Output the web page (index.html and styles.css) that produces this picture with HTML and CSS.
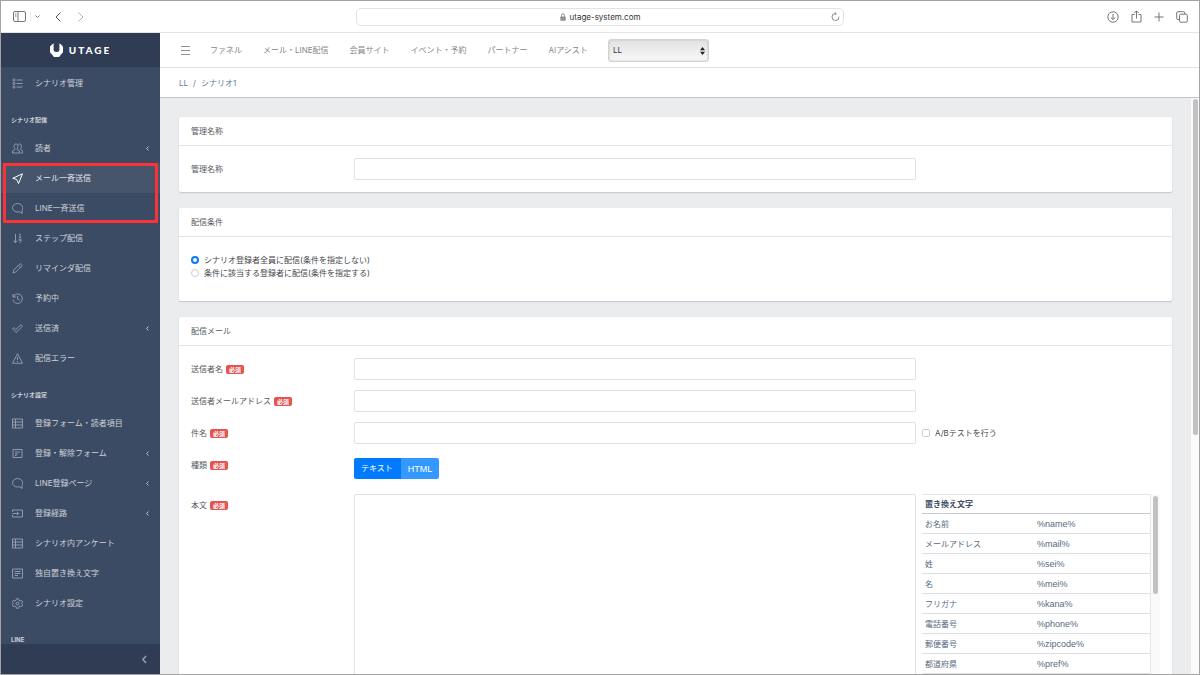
FILE: index.html
```html
<!DOCTYPE html>
<html lang="ja">
<head>
<meta charset="utf-8">
<meta name="viewport" content="width=device-width, initial-scale=1">
<title>UTAGE</title>
<link rel="stylesheet" href="styles.css">
</head>
<body>
<svg class="defs" width="0" height="0" aria-hidden="true">
  <symbol id="i-list" viewBox="0 0 22 22"><path d="M9 4h12M9 11h12M9 18h12"/><circle cx="4" cy="4" r="2.2"/><circle cx="4" cy="11" r="2.2"/><circle cx="4" cy="18" r="2.2"/></symbol>
  <symbol id="i-people" viewBox="0 0 22 22"><path d="M8 2c-3 0-4 2-4 4.500 0 2 .6 3.500 1.700 4.700v2L1 16v4h14v-4l-4.700-2.800v-2c1.100-1.200 1.700-2.700 1.700-4.700C12 4 11 2 8 2zM13 2.500c3.500-1.500 6 .5 6 4 0 2-.5 3.500-1.600 4.700v2L21.500 16v4H17"/></symbol>
  <symbol id="i-send" viewBox="0 0 22 22"><path d="M21 1.500 1.500 10.500l8 2.500L13 21z"/></symbol>
  <symbol id="i-chat" viewBox="0 0 22 22"><path d="M11 1C5.500 1 1 4.800 1 9.500S5.500 18 11 18c1.300 0 2.500-.2 3.600-.6l5.400 3.600v-6c1.200-1.500 1.500-3.300 1.500-5.500C21.500 4.800 16.500 1 11 1z"/></symbol>
  <symbol id="i-sort" viewBox="0 0 22 22"><path d="M7 2v17M3 15l4 4.500 4-4.500M14 3l2-1v7M14 9h4M18 13.500c0-2-4-2-4 0s4 2 4 0v3c0 1.500-1.500 2.500-3 2.500"/></symbol>
  <symbol id="i-pencil" viewBox="0 0 22 22"><path d="M2 20l1.500-6L15 2.500c1.300-1.300 2.800-1.300 4 0 1.300 1.200 1.300 2.700 0 4L7.500 18zM13 4.500 17.500 9"/></symbol>
  <symbol id="i-history" viewBox="0 0 22 22"><path d="M2 2v6h6M2.500 7.500A9.500 9.500 0 1 1 1.800 13M11 6v6l4.500 2"/></symbol>
  <symbol id="i-check" viewBox="0 0 22 22"><path d="M1 11.500 3.500 9l4 4L18 3.500 21 6.500 8 19z"/></symbol>
  <symbol id="i-warning" viewBox="0 0 22 22"><path d="M11 1.500 21 20.500H1zM11 8v6M11 16v2"/></symbol>
  <symbol id="i-table" viewBox="0 0 22 22"><path d="M1 2h20v18H1zM1 8h20M1 14h20M7 2v18"/></symbol>
  <symbol id="i-form" viewBox="0 0 22 22"><path d="M2 3h18v16H2zM6 8h10M6 12h6M6 15h3"/></symbol>
  <symbol id="i-notes" viewBox="0 0 22 22"><path d="M1 2h20v18H1zM5 7h12M5 11h12M5 15h7"/></symbol>
  <symbol id="i-route" viewBox="0 0 22 22"><path d="M1 8V4h20v14H1v-4M1 11h12M10 7.500l3.500 3.500-3.500 3.500"/></symbol>
  <symbol id="i-gear" viewBox="0 0 22 22"><path d="M9 1.500h4l1 3 2.500 1.300 3-.8 2 3.500L19.300 11l2.200 2.500-2 3.500-3-.8L14 17.500l-1 3H9l-1-3-2.500-1.300-3 .8-2-3.500L2.700 11 .5 8.500l2-3.500 3 .8L8 4.500z"/><circle cx="11" cy="11" r="3"/></symbol>
  <symbol id="i-left" viewBox="0 0 8 14"><path d="M6.500 1.500 1.500 7l5 5.500"/></symbol>
</svg>

<div class="window">
  <header class="browser">
    <div class="tools">
      <button class="tool" aria-label="サイドバー"><svg width="13" height="11" viewBox="0 0 13 11"><rect x=".5" y=".5" width="12" height="10" rx="1.500"/><path d="M5 .5v10M2 3h1.500M2 5h1.500"/></svg></button>
      <span class="tool-sep"></span>
      <button class="tool tool-menu" aria-label="タブグループ"><svg width="5" height="3" viewBox="0 0 5 3"><path d="M.5.500l2 2 2-2"/></svg></button>
      <button class="tool tool-back" aria-label="戻る"><svg width="6" height="10" viewBox="0 0 6 10"><path d="M5.500.500 1 5l4.500 4.500"/></svg></button>
      <button class="tool tool-next" aria-label="進む"><svg width="6" height="10" viewBox="0 0 6 10"><path d="M.5.500 5 5 .5 9.500"/></svg></button>
    </div>
    <div class="address">
      <svg class="lock" width="6" height="8" viewBox="0 0 6 8"><rect x=".3" y="3.500" width="5.400" height="4.200" rx=".8"/><path d="M1.500 4V2.300a1.500 1.500 0 0 1 3 0V4"/></svg>
      <span>utage-system.com</span>
      <button class="tool reload" aria-label="再読み込み"><svg width="9" height="9" viewBox="0 0 9 9"><path d="M8 4.700A3.500 3.500 0 1 1 4.700 1.500M3.700.200l1.500 1.300-1.500 1.500"/></svg></button>
    </div>
    <div class="tools tools-end">
      <button class="tool" aria-label="ダウンロード"><svg width="12" height="12" viewBox="0 0 12 12"><circle cx="6" cy="6" r="5.200"/><path d="M6 3v5.500M3.900 6.500 6 8.600l2.100-2.100"/></svg></button>
      <button class="tool" aria-label="共有"><svg width="11" height="13" viewBox="0 0 11 13"><path d="M3.500 4.500H1v7.500h9V4.500H7.500M5.500 8.500V1M3.300 3 5.500.800 7.700 3"/></svg></button>
      <button class="tool" aria-label="新規タブ"><svg width="10" height="10" viewBox="0 0 10 10"><path d="M5 .5v9M.5 5h9"/></svg></button>
      <button class="tool" aria-label="タブ一覧"><svg width="12" height="12" viewBox="0 0 12 12"><path d="M3.500 8.500H2a1.300 1.300 0 0 1-1.300-1.300V2A1.300 1.300 0 0 1 2 .7h5.500A1.300 1.300 0 0 1 8.800 2v1"/><rect x="3.500" y="3.200" width="7.800" height="8" rx="1.300"/></svg></button>
    </div>
  </header>

  <div class="app">
    <aside class="sidebar">
      <a class="brand" href="#"><svg width="13" height="14" viewBox="0 0 13 14"><path d="M3.600.300v6.400c0 1.300 1 2.300 2.900 2.300s2.900-1 2.900-2.300V.300l2.600 2.200c.7.600 1 1.200 1 2.200v3.600c0 1-.3 1.600-1 2.300l-1.300 1.100-.9 1.600c-.3.600-.7.700-1.400.700H4.600c-.7 0-1.100-.1-1.400-.7l-.9-1.600L1 10.600C.3 9.900 0 9.300 0 8.300V4.700c0-1 .3-1.600 1-2.200z"/></svg><span>UTAGE</span></a>
      <nav class="menu">
        <a class="item" href="#"><svg class="icon"><use href="#i-list"/></svg><span>シナリオ管理</span></a>
        <h2 class="group">シナリオ配信</h2>
        <a class="item" href="#"><svg class="icon"><use href="#i-people"/></svg><span>読者</span><svg class="more"><use href="#i-left"/></svg></a>
        <div class="marked">
          <a class="item active" href="#"><svg class="icon"><use href="#i-send"/></svg><span>メール一斉送信</span></a>
          <a class="item" href="#"><svg class="icon"><use href="#i-chat"/></svg><span>LINE一斉送信</span></a>
        </div>
        <a class="item" href="#"><svg class="icon"><use href="#i-sort"/></svg><span>ステップ配信</span></a>
        <a class="item" href="#"><svg class="icon"><use href="#i-pencil"/></svg><span>リマインダ配信</span></a>
        <a class="item" href="#"><svg class="icon"><use href="#i-history"/></svg><span>予約中</span></a>
        <a class="item" href="#"><svg class="icon"><use href="#i-check"/></svg><span>送信済</span><svg class="more"><use href="#i-left"/></svg></a>
        <a class="item" href="#"><svg class="icon"><use href="#i-warning"/></svg><span>配信エラー</span></a>
        <h2 class="group">シナリオ設定</h2>
        <a class="item" href="#"><svg class="icon"><use href="#i-table"/></svg><span>登録フォーム・読者項目</span></a>
        <a class="item" href="#"><svg class="icon"><use href="#i-form"/></svg><span>登録・解除フォーム</span><svg class="more"><use href="#i-left"/></svg></a>
        <a class="item" href="#"><svg class="icon"><use href="#i-chat"/></svg><span>LINE登録ページ</span><svg class="more"><use href="#i-left"/></svg></a>
        <a class="item" href="#"><svg class="icon"><use href="#i-route"/></svg><span>登録経路</span><svg class="more"><use href="#i-left"/></svg></a>
        <a class="item" href="#"><svg class="icon"><use href="#i-table"/></svg><span>シナリオ内アンケート</span></a>
        <a class="item" href="#"><svg class="icon"><use href="#i-notes"/></svg><span>独自置き換え文字</span></a>
        <a class="item" href="#"><svg class="icon"><use href="#i-gear"/></svg><span>シナリオ設定</span></a>
        <h2 class="group">LINE</h2>
      </nav>
      <button class="collapse" aria-label="メニューを閉じる"><svg><use href="#i-left"/></svg></button>
    </aside>

    <div class="content">
      <div class="topnav">
        <button class="burger" aria-label="メニュー"><svg width="9" height="9" viewBox="0 0 9 9"><path d="M0 .5h9M0 4.500h9M0 8.500h9"/></svg></button>
        <nav class="links">
          <a href="#">ファネル</a>
          <a href="#">メール・LINE配信</a>
          <a href="#">会員サイト</a>
          <a href="#">イベント・予約</a>
          <a href="#">パートナー</a>
          <a href="#">AIアシスト</a>
        </nav>
        <div class="account">
          <select aria-label="アカウント"><option>LL</option></select>
          <svg width="5" height="8" viewBox="0 0 5 8"><path d="M2.500 0 5 3.300H0zM2.500 8 0 4.700h5z"/></svg>
        </div>
      </div>
      <nav class="crumbs"><a href="#">LL</a><span>/</span><a href="#">シナリオ1</a></nav>

      <div class="scroller">
        <main class="cards">
          <section class="card">
            <h1 class="card-head">管理名称</h1>
            <div class="card-body">
              <div class="row"><label class="name" for="title">管理名称</label><input class="field" id="title" type="text"></div>
            </div>
          </section>
          <section class="card">
            <h1 class="card-head">配信条件</h1>
            <div class="card-body options">
              <label class="option"><input type="radio" name="target" checked><span>シナリオ登録者全員に配信(条件を指定しない)</span></label>
              <label class="option"><input type="radio" name="target"><span>条件に該当する登録者に配信(条件を指定する)</span></label>
            </div>
          </section>
          <section class="card">
            <h1 class="card-head">配信メール</h1>
            <div class="card-body">
              <div class="row"><label class="name" for="sender">送信者名<b class="badge">必須</b></label><input class="field" id="sender" type="text"></div>
              <div class="row"><label class="name" for="mail">送信者メールアドレス<b class="badge">必須</b></label><input class="field" id="mail" type="text"></div>
              <div class="row"><label class="name" for="subject">件名<b class="badge">必須</b></label><input class="field" id="subject" type="text"><label class="option"><input type="checkbox"><span>A/Bテストを行う</span></label></div>
              <div class="row"><span class="name">種類<b class="badge">必須</b></span><div class="toggle"><button class="on">テキスト</button><button>HTML</button></div></div>
              <div class="row">
                <label class="name" for="text">本文<b class="badge">必須</b></label>
                <textarea class="field area" id="text"></textarea>
                <div class="tokens">
                  <table>
                    <thead><tr><th colspan="2">置き換え文字</th></tr></thead>
                    <tbody>
                      <tr><td>お名前</td><td>%name%</td></tr>
                      <tr><td>メールアドレス</td><td>%mail%</td></tr>
                      <tr><td>姓</td><td>%sei%</td></tr>
                      <tr><td>名</td><td>%mei%</td></tr>
                      <tr><td>フリガナ</td><td>%kana%</td></tr>
                      <tr><td>電話番号</td><td>%phone%</td></tr>
                      <tr><td>郵便番号</td><td>%zipcode%</td></tr>
                      <tr><td>都道府県</td><td>%pref%</td></tr>
                      <tr><td></td><td></td></tr>
                    </tbody>
                  </table>
                  <div class="track"><div class="thumb"></div></div>
                </div>
              </div>
            </div>
          </section>
        </main>
        <div class="track page-track"><div class="thumb"></div></div>
      </div>
    </div>
  </div>
</div>
</body>
</html>
```
FILE: styles.css
```css
* { box-sizing: border-box; }

body {
  margin: 0;
  color: #55585d;
  font: 8px/12px Inter, "Noto Sans CJK JP", sans-serif;
}

button, input, select, textarea { font: inherit; margin: 0; }
button { padding: 0; border: 0; background: none; color: inherit; }
a { color: inherit; text-decoration: none; }
h1, h2 { margin: 0; font: inherit; }
svg { display: block; fill: none; stroke: currentColor; }
.defs { position: absolute; }

.window {
  display: flex;
  flex-direction: column;
  height: 100vh;
  overflow: hidden;
  border: 1px solid #a3a3a3;
  background: #fff;
}

/* browser bar */
.browser {
  display: grid;
  grid-template-columns: 1fr 488px 1fr;
  align-items: center;
  flex: none;
  height: 32px;
  border-bottom: 1px solid #e4e4e4;
  color: #777;
}
.tools { display: flex; align-items: center; padding-left: 12px; }
.tools-end { justify-content: flex-end; gap: 12px; padding: 0 11px 0 0; }
.tool { display: flex; }
.tool-sep { width: 1px; height: 10px; margin-left: 4px; background: #ececec; }
.tool-menu { margin-left: 4px; }
.tool-back { margin-left: 15px; color: #555; }
.tool-next { margin-left: 17px; color: #b0b0b0; }
.address {
  display: flex;
  align-items: center;
  justify-content: center;
  gap: 4px;
  position: relative;
  height: 18px;
  border: 1px solid #e3e3e3;
  border-radius: 5px;
  color: #333;
}
.lock { color: #909090; }
.lock rect { fill: currentColor; stroke: none; }
.reload { position: absolute; right: 3px; color: #8a8a8a; }

.app { display: flex; flex: 1; min-height: 0; }

/* sidebar */
.sidebar {
  display: flex;
  flex-direction: column;
  flex: none;
  width: 159px;
  background: #3c4b64;
  color: #ced2d8;
}
.brand {
  display: flex;
  align-items: center;
  justify-content: center;
  gap: 6px;
  flex: none;
  height: 34px;
  background: #303c54;
  color: #fff;
  font: 900 10px/12px Lato, sans-serif;
  letter-spacing: 2px;
}
.brand svg { fill: currentColor; stroke: none; }
.menu { flex: 1; min-height: 0; padding-top: 1px; overflow: hidden; }
.item {
  display: flex;
  align-items: center;
  gap: 12px;
  height: 30px;
  padding: 0 11px;
}
.item.active { background: #46546c; color: #e6e9ed; }
.icon { width: 11px; height: 11px; color: #a5adb9; stroke-width: 1.6; }
.active .icon { color: #fff; stroke-width: 2; }
.more { width: 3px; height: 5px; margin-left: auto; stroke-width: 2.5; }
.group {
  padding: 17px 10px 8px;
  font-size: 6px;
  font-weight: 700;
  line-height: 10px;
}
.marked { position: relative; }
.marked::after {
  content: "";
  position: absolute;
  inset: 0 2px 0 2px;
  border: 3px solid #fb3236;
  pointer-events: none;
}
.collapse {
  display: flex;
  align-items: center;
  justify-content: flex-end;
  flex: none;
  height: 30px;
  padding-right: 13px;
  background: #303c54;
  color: #959dab;
}
.collapse svg { width: 5px; height: 9px; stroke-width: 2.5; }

/* top navigation */
.content { display: flex; flex-direction: column; flex: 1; min-width: 0; }
.topnav {
  display: flex;
  align-items: center;
  gap: 20px;
  flex: none;
  height: 35px;
  padding-left: 21px;
  border-bottom: 1px solid #dfe1e5;
  color: #85868b;
}
.burger { display: flex; color: #8d8f96; }
.links { display: flex; gap: 21px; }
.account { position: relative; }
.account select {
  display: block;
  width: 101px;
  height: 23px;
  padding: 0 4px;
  appearance: none;
  border: 1px solid #d3d3d3;
  border-radius: 3px;
  background: linear-gradient(#e2e2e2, #f8f8f8);
  color: #333;
  box-shadow: inset 0 0 2px #bbb;
}
.account svg {
  position: absolute;
  top: 8px;
  right: 4px;
  fill: #222;
  stroke: none;
  pointer-events: none;
}
.crumbs {
  display: flex;
  align-items: center;
  gap: 5px;
  flex: none;
  height: 30px;
  padding-left: 19px;
  border-bottom: 1px solid #c0c4cc;
  color: #6b7890;
}

/* page area */
.scroller {
  display: flex;
  flex: 1;
  min-height: 0;
  overflow: hidden;
  background: #ebecee;
}
.cards {
  display: flex;
  flex-direction: column;
  gap: 16px;
  flex: 1;
  min-width: 0;
  padding: 19px 19px 0;
}
.card {
  flex: none;
  border-radius: 2px;
  background: #fff;
  box-shadow: 0 1px 1px #c6cad2, 0 1px 2px #d8dbe0;
}
.card-head { padding: 8px 12px; border-bottom: 1px solid #e2e4e7; }
.card-body { display: flex; flex-direction: column; gap: 10px; padding: 12px; }
.card-body.options { gap: 0; padding: 16px 12px 22px; }
.row {
  display: grid;
  grid-template-columns: 157fr 562fr 238fr;
  align-items: start;
  column-gap: 6px;
}
.name { display: flex; align-items: center; gap: 3px; height: 22px; }
.badge {
  height: 9px;
  margin-top: 1px;
  padding: 0 3px;
  border-radius: 2px;
  background: #e55353;
  color: #fff;
  font-size: 6px;
  font-weight: 700;
  line-height: 9px;
}
.field {
  width: 100%;
  height: 22px;
  padding: 4px 6px;
  border: 1px solid #dfe1e4;
  border-radius: 2px;
  background: #fff;
}
.area { display: block; height: 240px; resize: none; }
.option { display: flex; align-items: center; gap: 5px; height: 13px; color: #46484c; }
.row .option { height: 22px; }
.option input {
  flex: none;
  width: 8px;
  height: 8px;
  appearance: none;
  border: 1px solid #cfcfcf;
  border-radius: 2px;
  background: #fff;
}
.option input[type="radio"] { border-radius: 50%; }
.option input[type="radio"]:checked { border: 2px solid #0a7aff; }
.toggle { display: flex; padding: 4px 0 5px; }
.toggle button {
  height: 21px;
  padding: 0 7px;
  border-radius: 0 2px 2px 0;
  background: #3399ff;
  color: #fff;
  font-family: "Liberation Sans", "Noto Sans CJK JP", sans-serif;
  font-size: 9px;
}
.toggle .on {
  padding: 0 8px 0 7px;
  border-radius: 2px 0 0 2px;
  background: #007bff;
  font-size: 8px;
}

.tokens { display: flex; height: 240px; overflow: hidden; color: #5a6980; }
.tokens table {
  flex: 1;
  align-self: flex-start;
  width: 100%;
  table-layout: fixed;
  border-collapse: separate;
  border-spacing: 0;
  border-top: 1px solid #e4e6ea;
  border-right: 1px solid #e4e6ea;
}
.tokens th, .tokens td {
  height: 20px;
  padding: 0 3px;
  border-bottom: 1px solid #dcdfe4;
  text-align: left;
  font-weight: 400;
}
.tokens td + td { padding-left: 1px; font: 9px/12px "Liberation Sans", sans-serif; }
.tokens th { height: 19px; border-bottom-color: #c4c9d6; color: #3f4d66; font-weight: 700; }

.track { flex: none; width: 9px; padding: 2px; background: #fafafa; }
.thumb { height: 98px; border-radius: 3px; background: #c1c1c1; }
.page-track { width: 8px; padding: 1px 1px 0 2px; }
.page-track .thumb { height: 336px; }
```
